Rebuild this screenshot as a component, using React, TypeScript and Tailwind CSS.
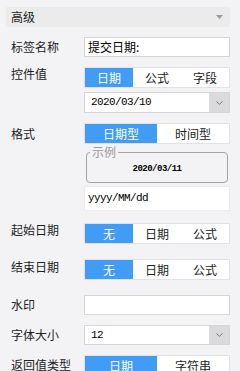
import React from "react";

const cjk = "font-['Microsoft_YaHei','Noto_Sans_CJK_SC','Noto_Sans',sans-serif]";
const mono = "font-['SimSun','Liberation_Mono',monospace]";

function Segment({ items, active }: { items: string[]; active: number }) {
  return (
    <div className="flex h-[21px] border border-[#e2e2e4] bg-white">
      {items.map((t, i) => (
        <div
          key={t}
          className={
            "flex flex-1 items-center justify-center text-[12px] leading-[19px] " +
            (i === active ? "bg-[#419cf6] text-white" : "bg-white text-[#222]")
          }
        >
          {t}
        </div>
      ))}
    </div>
  );
}

function Chevron() {
  return (
    <svg width="7" height="4" viewBox="0 0 7 4" className="block">
      <path d="M0.5 0.5 L3.5 3.3 L6.5 0.5" fill="none" stroke="#7a7a7a" strokeWidth="1" />
    </svg>
  );
}

function Select({ value, h = "h-[21px]" }: { value: string; h?: string }) {
  return (
    <div className={"flex border border-[#d6d6d8] bg-white " + h}>
      <div className={"flex flex-1 items-center pl-[6px] text-[11px] tracking-[-0.6px] text-black " + mono}>
        {value}
      </div>
      <div className="flex w-[20px] items-center justify-center bg-[#dadadc]">
        <Chevron />
      </div>
    </div>
  );
}

function Row({
  label,
  lh,
  mt,
  children,
}: {
  label: string;
  lh: string;
  mt: string;
  children: React.ReactNode;
}) {
  return (
    <div className={"flex " + mt}>
      <div className={"w-[78px] shrink-0 pl-[5px] text-[12px] text-[#222] " + lh}>{label}</div>
      <div className="w-[146px] shrink-0">{children}</div>
    </div>
  );
}

export default function App() {
  return (
    <div className={"min-h-screen w-[240px] overflow-hidden bg-[#f3f3f5] pl-[6px] pr-[10px] pt-[7px] " + cjk}>
      <div className="flex h-[20px] w-[224px] items-center justify-between bg-[#ebebeb] pl-[5px] pr-[7px]">
        <span className="text-[12px] leading-[20px] text-[#222]">高级</span>
        <svg width="7" height="4" viewBox="0 0 7 4" className="block">
          <path d="M0 0 L7 0 L3.5 4 Z" fill="#9a9a9a" />
        </svg>
      </div>

      <Row label="标签名称" lh="leading-[20px]" mt="mt-[10px]">
        <div className="flex h-[20px] items-center border border-[#d4d4d6] bg-white pl-[3px] text-[12px] text-black">
          提交日期:
        </div>
      </Row>

      <Row label="控件值" lh="leading-[14px]" mt="mt-[10px]">
        <Segment items={["日期", "公式", "字段"]} active={0} />
        <div className="mt-[4px]">
          <Select value="2020/03/10" />
        </div>
      </Row>

      <Row label="格式" lh="leading-[21px]" mt="mt-[10px]">
        <Segment items={["日期型", "时间型"]} active={0} />
        <div className="relative mx-[2px] mt-[8px] flex h-[31px] items-center justify-center rounded-[4px] border border-[#a3a3a5] pt-[5px]">
          <span className="absolute left-[3px] top-[-8px] bg-[#f3f3f5] px-[2px] text-[12px] leading-[14px] text-[#9a9a9a]">
            示例
          </span>
          <span className={"text-[9px] font-bold tracking-[-0.5px] text-black " + mono}>2020/03/11</span>
        </div>
        <div className={"mt-[3px] flex h-[25px] items-center border border-[#ebebed] bg-white pl-[3px] text-[11px] tracking-[-0.6px] text-black " + mono}>
          yyyy/MM/dd
        </div>
      </Row>

      <Row label="起始日期" lh="leading-[14px]" mt="mt-[12px]">
        <Segment items={["无", "日期", "公式"]} active={0} />
      </Row>

      <Row label="结束日期" lh="leading-[15px]" mt="mt-[15px]">
        <Segment items={["无", "日期", "公式"]} active={0} />
      </Row>

      <Row label="水印" lh="leading-[20px]" mt="mt-[15px]">
        <div className="h-[20px] border border-[#d6d6d8] bg-white" />
      </Row>

      <Row label="字体大小" lh="leading-[20px]" mt="mt-[10px]">
        <Select value="12" h="h-[20px]" />
      </Row>

      <Row label="返回值类型" lh="leading-[20px]" mt="mt-[10px]">
        <Segment items={["日期", "字符串"]} active={0} />
      </Row>
    </div>
  );
}
